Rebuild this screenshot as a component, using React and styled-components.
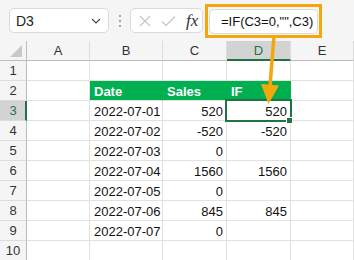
import React from "react";
import styled, { createGlobalStyle } from "styled-components";

const GlobalStyle = createGlobalStyle`
  html, body {
    margin: 0;
    padding: 0;
    background: #ffffff;
  }
  body {
    font-family: "Liberation Sans", Arial, sans-serif;
  }
`;

const GREEN = "#217346";
const ORANGE = "#f4a70c";
const GRID = "#e1e1e1";

const Page = styled.div`
  position: relative;
  width: 354px;
  height: 260px;
  overflow: hidden;
  background: #fff;
`;

const Toolbar = styled.div`
  height: 41px;
  background: #f5f5f5;
  display: flex;
  align-items: center;
  padding-left: 9px;
  box-sizing: border-box;
`;

const NameBox = styled.div`
  width: 100px;
  height: 25px;
  box-sizing: border-box;
  background: #fff;
  border: 1px solid #dadada;
  border-radius: 5px;
  display: flex;
  align-items: center;
  justify-content: space-between;
  padding: 0 7px 0 6px;
  font-size: 14px;
  color: #222;
`;

const Dots = styled.div`
  width: 21px;
  display: flex;
  flex-direction: column;
  align-items: center;
  gap: 3px;
  span {
    width: 2px;
    height: 2px;
    background: #8a8a8a;
    border-radius: 1px;
  }
`;

const FxBox = styled.div`
  width: 73px;
  height: 25px;
  box-sizing: border-box;
  background: #fff;
  border: 1px solid #dadada;
  border-radius: 5px;
  display: flex;
  align-items: center;
  gap: 9px;
  padding-left: 7px;
`;

const FxLabel = styled.span`
  font-family: "Liberation Serif", "Times New Roman", serif;
  font-style: italic;
  font-size: 17px;
  color: #333;
  margin-left: 1px;
`;

const Highlight = styled.div`
  margin-left: 2px;
  width: 117px;
  height: 34px;
  box-sizing: border-box;
  border: 3px solid ${ORANGE};
  padding: 2px 1px 0 1px;
  display: flex;
  align-items: flex-start;
`;

const FormulaInput = styled.div`
  flex: 1;
  height: 25px;
  box-sizing: border-box;
  background: #fff;
  border: 1px solid #dadada;
  border-radius: 5px;
  display: flex;
  align-items: center;
  padding-left: 11px;
  font-size: 13px;
  color: #111;
  white-space: pre;
`;

const Sheet = styled.div`
  position: relative;
  display: grid;
  grid-template-columns: 27px 63px 73px 64px 64px 63px;
  grid-auto-rows: 20px;
`;

const HeadCell = styled.div`
  box-sizing: border-box;
  background: ${(p) => (p.$active ? "#d3d3d3" : "#f5f5f5")};
  border-right: 1px solid #dcdcdc;
  border-bottom: ${(p) => (p.$active ? `2px solid ${GREEN}` : "1px solid #bdbdbd")};
  display: flex;
  align-items: center;
  justify-content: center;
  font-size: 13px;
  color: ${(p) => (p.$active ? GREEN : "#333")};
  padding-top: ${(p) => (p.$active ? "1px" : "0")};
`;

const Corner = styled(HeadCell)`
  position: relative;
  border-right: 1px solid #bdbdbd;
  &::after {
    content: "";
    position: absolute;
    right: 4px;
    bottom: 3px;
    width: 0;
    height: 0;
    border-left: 12px solid transparent;
    border-bottom: 12px solid #c8c8c8;
  }
`;

const RowHead = styled.div`
  box-sizing: border-box;
  background: ${(p) => (p.$active ? "#d3d3d3" : "#f5f5f5")};
  border-right: ${(p) => (p.$active ? `2px solid ${GREEN}` : "1px solid #bdbdbd")};
  border-bottom: 1px solid #dcdcdc;
  display: flex;
  align-items: center;
  justify-content: center;
  font-size: 13px;
  color: ${(p) => (p.$active ? GREEN : "#333")};
  padding-left: ${(p) => (p.$active ? "1px" : "0")};
`;

const Cell = styled.div`
  box-sizing: border-box;
  border-right: 1px solid ${(p) => (p.$fill ? "#00b050" : GRID)};
  border-bottom: 1px solid ${GRID};
  background: ${(p) => (p.$fill ? "#00b050" : "#fff")};
  color: ${(p) => (p.$fill ? "#fff" : "#111")};
  font-weight: ${(p) => (p.$fill ? 700 : 400)};
  font-size: 13px;
  display: flex;
  align-items: center;
  justify-content: ${(p) => (p.$num ? "flex-end" : "flex-start")};
  padding: 1px 3px 0 4px;
  white-space: nowrap;
  overflow: hidden;
`;

const Selection = styled.div`
  position: absolute;
  left: 225px;
  top: 58px;
  width: 67px;
  height: 23px;
  box-sizing: border-box;
  border: 2px solid ${GREEN};
  pointer-events: none;
`;

const Handle = styled.div`
  position: absolute;
  left: 286px;
  top: 76px;
  width: 7px;
  height: 7px;
  box-sizing: border-box;
  background: ${GREEN};
  border: 1px solid #fff;
`;

const ArrowLayer = styled.svg`
  position: absolute;
  left: 0;
  top: 0;
  pointer-events: none;
`;

const cols = ["A", "B", "C", "D", "E"];

const rows = [
  { n: 1 },
  { n: 2, head: true, b: "Date", c: "Sales", d: "IF" },
  { n: 3, b: "2022-07-01", c: "520", d: "520" },
  { n: 4, b: "2022-07-02", c: "-520", d: "-520" },
  { n: 5, b: "2022-07-03", c: "0", d: "" },
  { n: 6, b: "2022-07-04", c: "1560", d: "1560" },
  { n: 7, b: "2022-07-05", c: "0", d: "" },
  { n: 8, b: "2022-07-06", c: "845", d: "845" },
  { n: 9, b: "2022-07-07", c: "0", d: "" },
  { n: 10 },
];

function App() {
  return (
    <Page>
      <GlobalStyle />
      <Toolbar>
        <NameBox>
          <span>D3</span>
          <svg width="10" height="6" viewBox="0 0 10 6">
            <path d="M1 1l4 4 4-4" fill="none" stroke="#444" strokeWidth="1.1" />
          </svg>
        </NameBox>
        <Dots>
          <span />
          <span />
          <span />
        </Dots>
        <FxBox>
          <svg width="14" height="14" viewBox="0 0 14 14">
            <path d="M2 2l10 10M12 2L2 12" stroke="#c4c4c4" strokeWidth="1.1" fill="none" />
          </svg>
          <svg width="15" height="12" viewBox="0 0 15 12">
            <path d="M1 6.5l4 4L14 1.5" stroke="#c4c4c4" strokeWidth="1.1" fill="none" />
          </svg>
          <FxLabel>fx</FxLabel>
        </FxBox>
        <Highlight>
          <FormulaInput>=IF(C3=0,"",C3)</FormulaInput>
        </Highlight>
      </Toolbar>
      <Sheet>
        <Corner />
        {cols.map((c) => (
          <HeadCell key={c} $active={c === "D"}>
            {c}
          </HeadCell>
        ))}
        {rows.map((r) => (
          <React.Fragment key={r.n}>
            <RowHead $active={r.n === 3}>{r.n}</RowHead>
            <Cell />
            <Cell $fill={r.head}>{r.b}</Cell>
            <Cell $fill={r.head} $num={!r.head}>
              {r.c}
            </Cell>
            <Cell $fill={r.head} $num={!r.head}>
              {r.d}
            </Cell>
            <Cell />
          </React.Fragment>
        ))}
        <Selection />
        <Handle />
      </Sheet>
      <ArrowLayer width="354" height="260" viewBox="0 0 354 260">
        <line x1="274" y1="36" x2="270" y2="86" stroke={ORANGE} strokeWidth="3.5" />
        <polygon points="261,84 279,85.5 268.5,104" fill={ORANGE} />
      </ArrowLayer>
    </Page>
  );
}

export default App;
